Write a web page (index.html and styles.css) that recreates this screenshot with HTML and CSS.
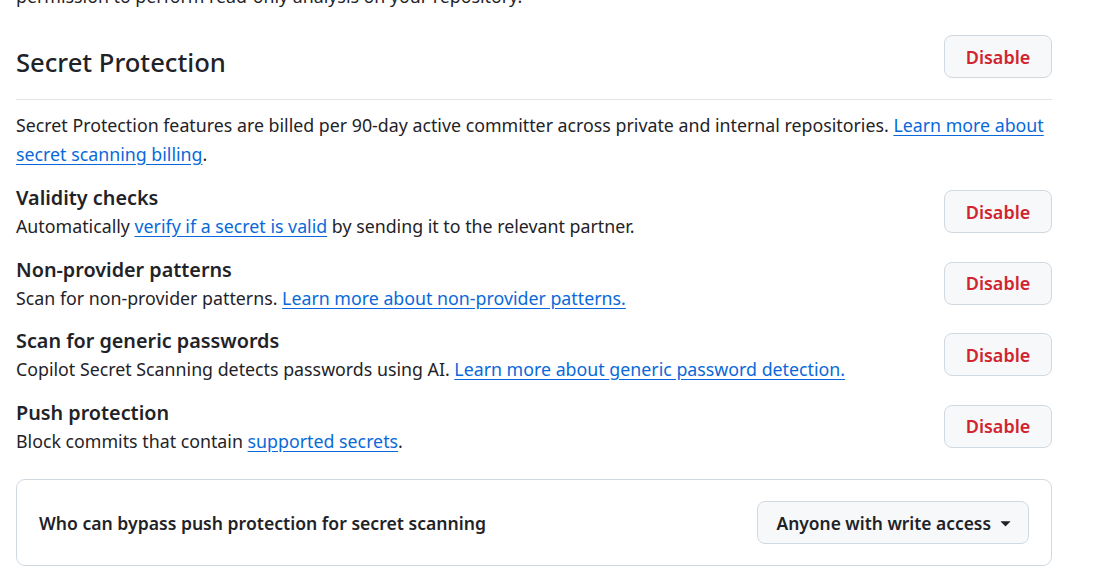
FILE: index.html
```html
<!DOCTYPE html>
<html lang="en">
<head>
<meta charset="utf-8">
<title>Secret Protection</title>
<link rel="stylesheet" href="styles.css">
</head>
<body>
<div class="page">
  <p class="intro">permission to perform read-only analysis on your repository.</p>

  <div class="subhead">
    <h2 class="subhead-title">Secret Protection</h2>
    <button class="btn btn-danger" type="button">Disable</button>
  </div>

  <p class="billing">Secret Protection features are billed per 90-day active committer across private and internal repositories. <a href="#">Learn more about</a> <a href="#">secret scanning billing</a>.</p>

  <div class="setting">
    <div class="setting-text">
      <h3 class="setting-title">Validity checks</h3>
      <p class="setting-desc">Automatically <a href="#">verify if a secret is valid</a> by sending it to the relevant partner.</p>
    </div>
    <button class="btn btn-danger" type="button">Disable</button>
  </div>

  <div class="setting">
    <div class="setting-text">
      <h3 class="setting-title">Non-provider patterns</h3>
      <p class="setting-desc">Scan for non-provider patterns. <a href="#">Learn more about non-provider patterns.</a></p>
    </div>
    <button class="btn btn-danger" type="button">Disable</button>
  </div>

  <div class="setting">
    <div class="setting-text">
      <h3 class="setting-title">Scan for generic passwords</h3>
      <p class="setting-desc">Copilot Secret Scanning detects passwords using AI. <a href="#">Learn more about </a><a href="#">generic password detection.</a></p>
    </div>
    <button class="btn btn-danger" type="button">Disable</button>
  </div>

  <div class="setting">
    <div class="setting-text">
      <h3 class="setting-title">Push protection</h3>
      <p class="setting-desc">Block commits that contain <a href="#">supported secrets</a>.</p>
    </div>
    <button class="btn btn-danger" type="button">Disable</button>
  </div>

  <div class="bypass-box">
    <span class="bypass-label">Who can bypass push protection for secret scanning</span>
    <button class="btn btn-select" type="button">Anyone with write access
      <svg class="caret" viewBox="0 0 16 16" width="21" height="21" aria-hidden="true"><path d="m4.427 7.427 3.396 3.396a.25.25 0 0 0 .354 0l3.396-3.396A.25.25 0 0 0 11.396 7H4.604a.25.25 0 0 0-.177.427Z"/></svg>
    </button>
  </div>
</div>
</body>
</html>
```

FILE: styles.css
```css
html, body {
  margin: 0;
  padding: 0;
  background: #ffffff;
}

body {
  font-family: "Noto Sans", "Open Sans", "Liberation Sans", sans-serif;
  font-size: 17.8px;
  color: #1f2328;
  overflow: hidden;
}

.page {
  width: 1036px;
  padding: 0 43px 0 16px;
}

p, h2, h3 {
  margin: 0;
}

a {
  color: #0969da;
  text-decoration: underline;
  text-underline-offset: 3px;
}

.intro {
  line-height: 29px;
  margin-top: -18px;
}

.subhead {
  display: flex;
  align-items: flex-start;
  justify-content: space-between;
  margin-top: 24px;
  padding-bottom: 15px;
  border-bottom: 1px solid #dfe4e9;
}

.subhead-title {
  font-size: 25.6px;
  font-weight: 500;
  line-height: 43px;
  padding-top: 6px;
}

.billing {
  line-height: 29px;
  margin-top: 11px;
}

.setting {
  display: flex;
  align-items: center;
  justify-content: space-between;
  margin-top: 14px;
}

.setting + .setting {
  margin-top: 13.6px;
}

.setting-title {
  font-size: 19.8px;
  font-weight: 600;
  line-height: 29px;
}

.setting-desc {
  line-height: 29px;
}

.btn {
  box-sizing: border-box;
  height: 43px;
  border: 1px solid #d1d9e0;
  border-radius: 8px;
  background: #f6f8fa;
  font-family: inherit;
  font-size: 18px;
  font-weight: 600;
  cursor: pointer;
  display: inline-flex;
  align-items: center;
}

.btn-danger {
  width: 108px;
  justify-content: center;
  color: #d1242f;
  flex-shrink: 0;
}

.setting .btn-danger {
  margin-top: -1px;
}

.bypass-box {
  display: flex;
  align-items: center;
  justify-content: space-between;
  margin-top: 23.5px;
  padding: 21px 22px;
  border: 1px solid #d1d9e0;
  border-radius: 9px;
}

.bypass-label {
  font-weight: 600;
  font-size: 17.6px;
}

.btn-select {
  font-size: 17.4px;
  color: #1f2328;
  padding: 0 12px 0 19px;
  gap: 4px;
}

.caret {
  fill: #1f2328;
}
```
